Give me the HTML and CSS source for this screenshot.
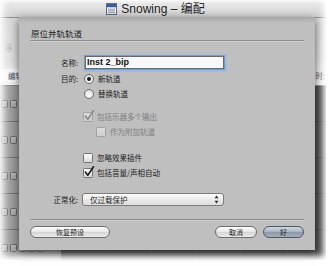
FILE: index.html
```html
<!DOCTYPE html>
<html lang="zh">
<head>
<meta charset="utf-8">
<title>原位并轨轨道</title>
<link rel="stylesheet" href="styles.css">
</head>
<body>
<div class="scene">
  <div class="window">
    <div class="titlebar">
      <svg class="doc-icon" width="11" height="12" viewBox="0 0 11 12">
        <rect x="0.5" y="0.5" width="10" height="11" fill="#eef1f6" stroke="#5a6a84"/>
        <rect x="1" y="1" width="9" height="3.2" fill="#3a5b9c"/>
        <path d="M2 6.2h7M2 7.9h7M2 9.6h7" stroke="#7d8aa0" stroke-width="0.8"/>
      </svg>
      <span class="title">Snowing – 编配</span>
    </div>
    <div class="toolbar"><span>序</span><span>列</span></div>
    <div class="strip"><span class="strip-btn">编辑</span><span class="strip-label">时:</span></div>
    <div class="arrange">
      <div class="tracklist">
        <div class="track"><span class="tbtn"></span><span class="tbtn"></span><span class="tbtn">K</span><span class="tbtn">M</span><span class="tbtn">S</span></div>
        <div class="track"><span class="tbtn"></span><span class="tbtn"></span><span class="tbtn">K</span><span class="tbtn">M</span><span class="tbtn">S</span></div>
        <div class="track"><span class="tbtn"></span><span class="tbtn"></span><span class="tbtn">K</span><span class="tbtn">M</span><span class="tbtn">S</span></div>
        <div class="track"><span class="tbtn"></span><span class="tbtn"></span><span class="tbtn">K</span><span class="tbtn">M</span><span class="tbtn">S</span></div>
        <div class="track"><span class="tbtn"></span><span class="tbtn"></span><span class="tbtn">K</span><span class="tbtn">M</span><span class="tbtn">S</span></div>
      </div>
      <div class="canvas"></div>
    </div>
  </div>

  <div class="sheet">
    <div class="sheet-title">原位并轨轨道</div>
    <div class="rule"></div>

    <div class="row name-row">
      <span class="lbl">名称:</span>
      <div class="field">Inst 2_bip</div>
    </div>

    <div class="row r-first">
      <span class="lbl">目的:</span>
      <span class="radio on"></span>
      <span class="opt">新轨道</span>
    </div>
    <div class="row r-next">
      <span class="lbl"></span>
      <span class="radio"></span>
      <span class="opt">替换轨道</span>
    </div>

    <div class="row c-group">
      <span class="lbl"></span>
      <span class="check disabled checked"><svg viewBox="0 0 12 12" width="12" height="12"><path d="M2.5 6.2 L4.8 9.2 L10.5 0.8" fill="none" stroke="#8a8a8a" stroke-width="1.6" stroke-linecap="round" stroke-linejoin="round"/></svg></span>
      <span class="opt dim">包括乐器多个输出</span>
    </div>
    <div class="row r-next">
      <span class="lbl"></span>
      <span class="check disabled indent"></span>
      <span class="opt dim">作为附加轨道</span>
    </div>

    <div class="row c-group2">
      <span class="lbl"></span>
      <span class="check"></span>
      <span class="opt">忽略效果插件</span>
    </div>
    <div class="row r-next">
      <span class="lbl"></span>
      <span class="check checked"><svg viewBox="0 0 12 12" width="12" height="12"><path d="M2.5 6.2 L4.8 9.2 L10.5 0.8" fill="none" stroke="#1a1a1a" stroke-width="1.6" stroke-linecap="round" stroke-linejoin="round"/></svg></span>
      <span class="opt">包括音量/声相自动</span>
    </div>

    <div class="row popup-row">
      <span class="lbl">正常化:</span>
      <div class="popup">
        <span>仅过载保护</span>
        <svg class="arrows" width="5" height="9" viewBox="0 0 5 9"><path d="M2.5 0.5 L4.5 3.3 H0.5 Z M2.5 8.5 L4.5 5.7 H0.5 Z" fill="#2a2a2a"/></svg>
      </div>
    </div>

    <div class="rule rule-bottom"></div>

    <div class="buttons">
      <span class="btn reset">恢复预设</span>
      <span class="btn cancel">取消</span>
      <span class="btn ok">好</span>
    </div>
  </div>

  <div class="fade"></div>
</div>
</body>
</html>
```

FILE: styles.css
```css
* { box-sizing: border-box; margin: 0; padding: 0; }

html, body {
  width: 334px;
  height: 266px;
  overflow: hidden;
  background: #fff;
}

body {
  font-family: "Liberation Sans", "Noto Sans CJK SC", sans-serif;
}

.scene {
  position: relative;
  width: 334px;
  height: 266px;
  background: #fff;
}

/* ---------- window behind the sheet ---------- */
.window {
  width: 326px;
  height: 260px;
  display: flex;
  flex-direction: column;
  overflow: hidden;
  background: #4d4d4d;
}

.titlebar {
  flex: none;
  height: 18px;
  display: flex;
  align-items: center;
  justify-content: center;
  gap: 4px;
  padding-right: 15px;
  background: linear-gradient(#ededed, #d3d3d3);
  border-bottom: 1px solid #8c8c8c;
  font-family: "Liberation Sans", "Noto Sans CJK SC", sans-serif;
  font-size: 12px;
  color: #222;
}

.title { line-height: 14px; }

.toolbar {
  flex: none;
  height: 44px;
  display: flex;
  align-items: flex-end;
  gap: 6px;
  padding: 0 0 9px 5px;
  background: linear-gradient(#d8d8d8, #dedede);
  font-family: "Noto Sans CJK SC", sans-serif;
  font-size: 7.5px;
  color: #b4b4b4;
}

.strip {
  flex: none;
  height: 24px;
  display: flex;
  align-items: center;
  justify-content: space-between;
  padding: 4px 1px 0 0;
  background: linear-gradient(#e2e2e2, #f2f2f2);
  border-bottom: 1px solid #8a8a8a;
  font-family: "Noto Sans CJK SC", sans-serif;
  font-size: 7.5px;
  color: #333;
}

.strip-btn {
  padding: 1px 6px 1px 8px;
  background: #f6f6f6;
  border-right: 1px solid #c4c4c4;
  color: #3a4a66;
}

.strip-label { color: #444; }

.arrange {
  flex: 1;
  display: flex;
  min-height: 0;
}

.tracklist {
  width: 62px;
  flex: none;
  display: flex;
  flex-direction: column;
  background: linear-gradient(to right, #a2a2a2, #929292);
  border-right: 1px solid #555;
}

.track {
  flex: none;
  height: 36px;
  display: flex;
  align-items: center;
  gap: 2px;
  padding-left: 1px;
  border-bottom: 1px solid #727272;
}

.tbtn {
  width: 7px;
  height: 8px;
  border: 1px solid #666;
  border-radius: 1.5px;
  background: linear-gradient(#bdbdbd, #a6a6a6);
  font-size: 5px;
  line-height: 6px;
  text-align: center;
  color: #222;
}

.canvas {
  flex: 1;
  background-color: #4e4e4e;
  background-image:
    linear-gradient(to bottom, transparent 35px, #3b3b3b 35px),
    linear-gradient(to right, transparent 44px, #585858 44px);
  background-size: 100% 36px, 45px 100%;
}

/* ---------- the sheet ---------- */
.sheet {
  position: absolute;
  left: 19px;
  top: 17px;
  width: 296px;
  height: 233px;
  padding: 0 11px;
  display: flex;
  flex-direction: column;
  background: #bfbfbf;
  box-shadow: 0 3px 9px rgba(0, 0, 0, 0.6), inset 0 5px 5px -3px rgba(0, 0, 0, 0.16);
  font-family: "Noto Sans CJK SC", "Liberation Sans", sans-serif;
  font-size: 7.5px;
  color: #1c1c1c;
}

.sheet-title {
  flex: none;
  height: 23px;
  padding: 10px 0 0 1px;
  font-size: 8.5px;
  line-height: 12px;
}

.rule {
  flex: none;
  height: 1px;
  background: #8e8e8e;
  box-shadow: 0 1px 0 #cfcfcf;
}

.row {
  flex: none;
  display: flex;
  align-items: center;
  height: 12px;
  line-height: 12px;
}

.lbl {
  flex: none;
  width: 48px;
  text-align: right;
}

.name-row { height: 17px; margin-top: 13px; }
.r-first { margin-top: 2px; }
.r-next { margin-top: 3px; }
.c-group { margin-top: 11px; }
.c-group2 { margin-top: 14px; }
.popup-row { height: 13px; margin-top: 14px; }
.rule-bottom { margin-top: 13px; }

.field {
  margin-left: 7px;
  width: 139px;
  height: 13px;
  padding-left: 1px;
  border: 1px solid #6a6a6a;
  background: #f8f8f8;
  box-shadow: 0 0 0 1px #6f9bd0, 0 0 1px 2.5px #9dbbe0;
  font-family: "Liberation Sans", sans-serif;
  font-weight: bold;
  font-size: 9px;
  line-height: 11px;
  color: #111;
}

.radio {
  flex: none;
  width: 10px;
  height: 10px;
  margin-left: 6px;
  margin-right: 4px;
  border: 1px solid #6c6c6c;
  border-radius: 50%;
  background: radial-gradient(circle at 50% 70%, #ffffff, #d6d6d6);
  display: flex;
  align-items: center;
  justify-content: center;
}

.radio.on::after {
  content: "";
  width: 4px;
  height: 4px;
  border-radius: 50%;
  background: #1a1a1a;
}

.check {
  position: relative;
  flex: none;
  width: 10px;
  height: 10px;
  margin-left: 5px;
  margin-right: 4px;
  border: 1px solid #737373;
  border-radius: 1.5px;
  background: linear-gradient(#fbfbfb, #d8d8d8);
}

.check.indent { margin-left: 18px; }

.check.disabled {
  border-color: #a2a2a2;
  background: linear-gradient(#dcdcdc, #cdcdcd);
}

.check svg {
  position: absolute;
  left: -1px;
  top: -3px;
}

.opt { white-space: nowrap; }
.dim { color: #7e7e7e; }

.popup {
  position: relative;
  margin-left: 4px;
  width: 142px;
  height: 13px;
  padding-left: 7px;
  border: 1px solid #7c7c7c;
  border-radius: 3px;
  background: linear-gradient(#fdfdfd, #e9e9e9 55%, #dedede);
  display: flex;
  align-items: center;
  justify-content: space-between;
  padding-right: 4px;
  line-height: 11px;
}

.arrows { flex: none; }

.buttons {
  flex: none;
  display: flex;
  align-items: center;
  height: 12px;
  margin-top: 6px;
}

.btn {
  flex: none;
  height: 12px;
  border: 1px solid #6c6c6c;
  border-radius: 6px;
  background: linear-gradient(#ffffff, #e6e6e6 50%, #d4d4d4 51%, #ececec);
  font-size: 7px;
  line-height: 10px;
  text-align: center;
  color: #1c1c1c;
}

.reset { width: 80px; }
.cancel { width: 42px; margin-left: auto; }
.ok {
  width: 41px;
  margin-left: 6px;
  border-color: #4d5866;
  background: linear-gradient(#d3d9e1, #a7b2c0 50%, #8c98a8 51%, #a6b0bd);
}

/* soft edges of the photographed window */
.fade {
  position: absolute;
  left: 0;
  top: 0;
  width: 326px;
  height: 260px;
  pointer-events: none;
  box-shadow:
    inset 7px 0 7px -3px rgba(255, 255, 255, 0.95),
    inset -6px 0 6px -3px rgba(255, 255, 255, 0.95),
    inset 0 -7px 6px -3px rgba(255, 255, 255, 0.95),
    inset 0 3px 3px -2px rgba(255, 255, 255, 0.8);
}
```
